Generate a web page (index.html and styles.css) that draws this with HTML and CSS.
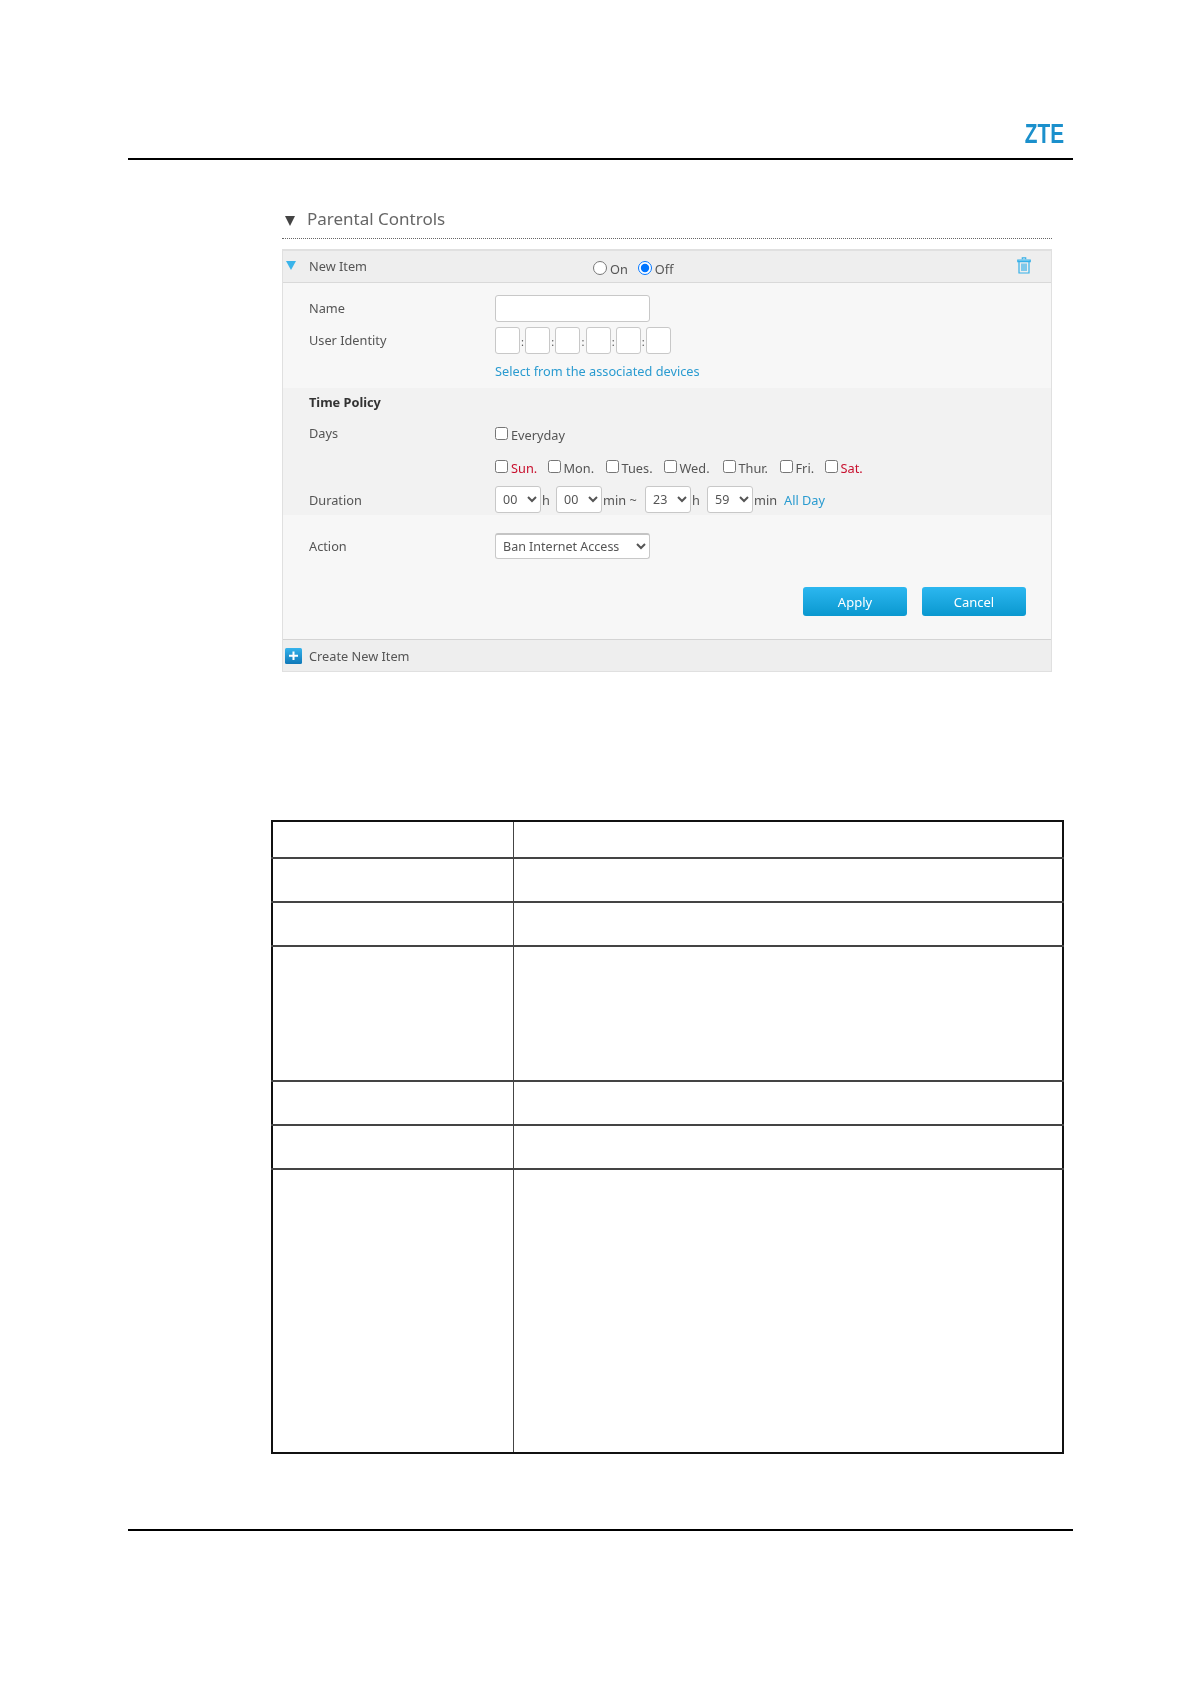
FILE: index.html
```html
<!DOCTYPE html>
<html lang="en">
<head>
<meta charset="utf-8">
<title>Parental Controls</title>
<link rel="stylesheet" href="styles.css">
</head>
<body>
<div class="page">
  <header class="doc-head"><span class="logo">ZTE</span></header>

  <section class="figure">
    <div class="title-row">
      <span class="tri-dark"></span>
      <h1 class="title">Parental Controls</h1>
    </div>

    <div class="panel">
      <div class="item-head">
        <span class="tri-blue"></span>
        <span class="item-name up">New Item</span>
        <div class="switch">
          <label class="opt"><input type="radio" name="state"><span class="low">On</span></label>
          <label class="opt"><input type="radio" name="state" checked><span class="low">Off</span></label>
        </div>
        <svg class="trash" viewBox="0 0 14 17" width="14" height="17" fill="none" stroke="#35b0e8" stroke-width="1.2">
          <path d="M5.3 2.2V.9h3.4v1.3"/>
          <path d="M.8 3h12.4V4.6H.8z" fill="#9edcf6"/>
          <path d="M2 4.6V16h10V4.6"/>
          <path d="M5 6.5v7.5M7 6.5v7.5M9 6.5v7.5"/>
        </svg>
      </div>

      <div class="sec sec-a">
        <div class="row">
          <span class="lbl up">Name</span>
          <input class="txt txt-name" type="text">
        </div>
        <div class="row">
          <span class="lbl up">User Identity</span>
          <div class="mac">
            <input class="txt txt-mac" type="text"><i>:</i>
            <input class="txt txt-mac" type="text"><i>:</i>
            <input class="txt txt-mac" type="text"><i>:</i>
            <input class="txt txt-mac" type="text"><i>:</i>
            <input class="txt txt-mac" type="text"><i>:</i>
            <input class="txt txt-mac" type="text">
          </div>
        </div>
        <div class="row row-link">
          <span></span>
          <a class="link up">Select from the associated devices</a>
        </div>
      </div>

      <div class="sec sec-b">
        <div class="policy">Time Policy</div>
        <div class="row row-days">
          <span class="lbl up">Days</span>
          <label class="day"><input type="checkbox"><span class="low">Everyday</span></label>
        </div>
        <div class="row row-week">
          <span></span>
          <div class="week">
            <label class="day d1"><input type="checkbox"><span class="low red">Sun.</span></label>
            <label class="day d2"><input type="checkbox"><span class="low">Mon.</span></label>
            <label class="day d2"><input type="checkbox"><span class="low">Tues.</span></label>
            <label class="day d3"><input type="checkbox"><span class="low">Wed.</span></label>
            <label class="day d4"><input type="checkbox"><span class="low">Thur.</span></label>
            <label class="day d5"><input type="checkbox"><span class="low">Fri.</span></label>
            <label class="day"><input type="checkbox"><span class="low red">Sat.</span></label>
          </div>
        </div>
        <div class="row row-dur">
          <span class="lbl">Duration</span>
          <div class="dur">
            <select class="sel sel-t"><option>00</option></select><span class="u u-h">h</span>
            <select class="sel sel-t"><option>00</option></select><span class="u u-m">min ~</span>
            <select class="sel sel-t"><option>23</option></select><span class="u u-h2">h</span>
            <select class="sel sel-t"><option>59</option></select><span class="u u-e">min</span>
            <a class="link">All Day</a>
          </div>
        </div>
      </div>

      <div class="sec sec-c">
        <div class="row row-act">
          <span class="lbl">Action</span>
          <select class="sel sel-act"><option>Ban Internet Access</option></select>
        </div>
        <div class="btns">
          <button class="btn" type="button">Apply</button>
          <button class="btn" type="button">Cancel</button>
        </div>
      </div>

      <div class="item-foot">
        <svg class="plus" viewBox="0 0 17 16" width="17" height="16">
          <defs><linearGradient id="pg" x1="0" y1="0" x2="0" y2="1"><stop offset="0" stop-color="#35b3ec"/><stop offset="1" stop-color="#0f78b8"/></linearGradient></defs>
          <rect width="17" height="16" rx="1.5" fill="url(#pg)"/>
          <path d="M8.5 3.5v8.5M4 7.7h9" stroke="#fff" stroke-width="2"/>
        </svg>
        <span class="item-name">Create New Item</span>
      </div>
    </div>
  </section>

  <table class="grid-table">
    <colgroup><col class="c1"><col></colgroup>
    <tbody>
      <tr class="r37"><td></td><td></td></tr>
      <tr class="r44"><td></td><td></td></tr>
      <tr class="r44"><td></td><td></td></tr>
      <tr class="r135"><td></td><td></td></tr>
      <tr class="r44"><td></td><td></td></tr>
      <tr class="r44"><td></td><td></td></tr>
      <tr class="r284"><td></td><td></td></tr>
    </tbody>
  </table>

  <footer class="doc-foot"></footer>
</div>
</body>
</html>
```
FILE: styles.css
```css
* { box-sizing: border-box; }
html, body { margin: 0; padding: 0; background: #fff; }
body { font-family: "Noto Sans", "Open Sans", sans-serif; color: #555; font-size: 12.75px; }

.page { width: 1191px; height: 1684px; padding: 0 118px 0 128px; overflow: hidden; }

.doc-head {
  height: 160px; border-bottom: 2px solid #000;
  display: flex; justify-content: flex-end; align-items: flex-end;
  padding: 0 9px 10px 0;
}
.logo {
  font-family: "Liberation Sans", sans-serif;
  font-weight: 700; font-size: 27px; line-height: 27px; color: #1b90cc;
  transform: scaleX(.77); transform-origin: right center;
}

.figure { margin-left: 154px; width: 770px; filter: blur(0.4px); }
.title-row {
  margin-top: 40px; height: 39px; border-bottom: 1px dotted #666;
  display: flex; align-items: flex-start; padding: 6px 0 0 3px;
}
.tri-dark {
  width: 0; height: 0; margin-top: 10px;
  border-left: 5.5px solid transparent; border-right: 5.5px solid transparent;
  border-top: 10px solid #444;
}
.title { margin: 0 0 0 12px; font-size: 17px; line-height: 26px; font-weight: 400; color: #666; }

.panel { margin-top: 10px; border: 1px solid #e0e0e0; border-top-width: 2px; background: #f7f7f7; }

.item-head {
  height: 32px; background: #eee; border-bottom: 1px solid #d9d9d9;
  display: grid; grid-template-columns: 26px 284px 1fr auto; align-items: center;
  padding-right: 20px;
}
.tri-blue {
  width: 0; height: 0; margin: 0 0 3px 3px;
  border-left: 5.5px solid transparent; border-right: 5.5px solid transparent;
  border-top: 9px solid #3ab4ea;
}
.item-name { line-height: 18px; color: #555; }
.up { padding-bottom: 2px; }
.switch { display: flex; gap: 10px; margin-top: 2px; }
.opt { display: flex; align-items: center; gap: 3px; }
.opt input { width: 14px; height: 14px; margin: 0; }
.low { padding-top: 4px; line-height: 17px; }
.trash { display: block; margin-bottom: 2px; }

.sec-a { padding: 12px 0 6px; }
.sec-b { background: #f2f2f2; height: 127px; }
.sec-c { padding: 18px 25px 23px 0; }

.row { display: grid; grid-template-columns: 212px 1fr; align-items: center; height: 27px; margin-bottom: 4px; }
.lbl { padding-left: 26px; line-height: 18px; }

.txt { display: block; background: #fff; border: 1px solid #c8c8c8; border-radius: 3px; height: 27px; padding: 0; }
.txt-name { width: 155px; }
.mac { display: flex; align-items: center; }
.txt-mac { width: 25px; }
.mac i { width: 5.2px; text-align: center; font-style: normal; font-size: 11px; line-height: 27px; padding-top: 2px; }

.row-link { margin: 9px 0 0; height: 20px; }
.link { color: #2a9bd0; line-height: 18px; }

.policy { height: 28px; line-height: 28px; padding-left: 26px; font-weight: 700; color: #333; }
.row-days { margin: 5px 0 0; height: 25px; }
.row-week { margin: 8px 0 0; height: 25px; }
.row-dur { margin: 7px 0 0; }

.day { display: inline-flex; align-items: center; gap: 3px; }
.day input { width: 13px; height: 13px; margin: 0; }
.week { display: flex; }
.d1 { width: 52.5px; }
.d2 { width: 58px; }
.d3 { width: 59px; }
.d4 { width: 57px; }
.d5 { width: 45px; }
.red { color: #c8102e; }

.dur { display: flex; align-items: center; }
.sel {
  background: #fff; border: 1px solid #c8c8c8; border-radius: 3px; height: 27px; margin: 0;
  font-family: inherit; font-size: 12.5px; color: #555; padding: 0 0 0 3px;
}
.sel-t { width: 46px; }
.u { line-height: 18px; }
.u-h { width: 15px; padding-left: 1px; }
.u-h2 { width: 16px; padding-left: 1px; }
.u-m { width: 43px; padding-left: 1px; }
.u-e { width: 31px; padding-left: 1px; }

.row-act { margin: 0; height: 26px; }
.sel-act { width: 155px; height: 26px; border-top: 2px solid #c4c4c4; }

.btns { display: flex; justify-content: flex-end; gap: 15px; margin-top: 28px; }
.btn {
  width: 104px; height: 29px; border: 0; border-radius: 3px; padding: 0;
  background: linear-gradient(#2cb7f0, #0a98cf);
  color: #fff; font: 13px "Noto Sans", sans-serif;
}

.item-foot {
  height: 32px; background: #eee; border-top: 1px solid #d4d4d4;
  display: flex; align-items: center; padding-left: 2px; gap: 7px;
}
.plus { display: block; }

.grid-table {
  margin: 148px 0 0 143px; width: 793px; table-layout: fixed;
  border-collapse: collapse; border: 2px solid #111;
}
.grid-table td { padding: 0; border: 1px solid #444; }
.grid-table tr + tr td { border-top: 2px solid #444; }
.c1 { width: 241px; }
.r37 { height: 37px; }
.r44 { height: 44px; }
.r135 { height: 135px; }
.r284 { height: 284px; }

.doc-foot { margin-top: 75px; border-top: 2px solid #000; }
```
